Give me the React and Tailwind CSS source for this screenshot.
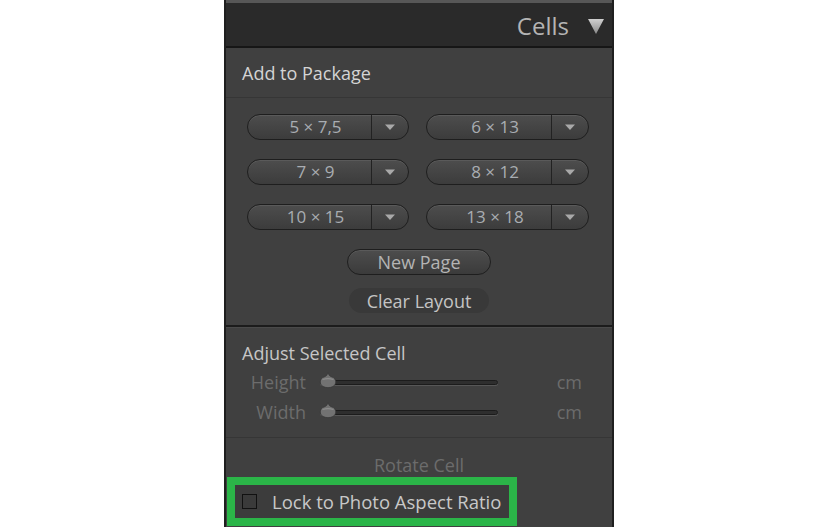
import React from "react";

const font = { fontFamily: '"Open Sans", "Liberation Sans", sans-serif' };

function Caret() {
  return (
    <svg width="12" height="8" viewBox="0 0 12 8">
      <path d="M1 1.5h10L6 7z" fill="#a9a9a9" />
    </svg>
  );
}

function SizeButton({ label }) {
  return (
    <div className="flex h-[26px] items-stretch rounded-full border border-[#1e1e1e] bg-gradient-to-b from-[#4d4d4d] to-[#3c3c3c] shadow-[inset_0_1px_0_rgba(255,255,255,0.08)]">
      <div className="flex flex-1 items-center justify-center pl-[12px] text-[17px] leading-[24px] text-[#a9adb2]">
        {label}
      </div>
      <div className="flex w-[37px] items-center justify-center border-l border-[#222]">
        <Caret />
      </div>
    </div>
  );
}

function Slider({ label }) {
  return (
    <div className="flex h-[30px] items-center">
      <div className="w-[80px] text-right text-[18px] leading-[24px] text-[#6c6c6c]">{label}</div>
      <div className="relative ml-[14px] h-[5px] w-[178px] rounded-full border border-[#1c1c1c] bg-[#2e2e2e] shadow-[0_1px_0_rgba(255,255,255,0.12)]">
        <svg className="absolute left-[-3px] top-[-10px]" width="20" height="18" viewBox="0 0 20 18">
          <path d="M10 1.5 C11 4.5 11.5 5 14 6 C18.5 7 19 13.5 15 15.5 C12 17 8 17 5 15.5 C1 13.5 1.5 7 6 6 C8.5 5 9 4.5 10 1.5z" fill="#727272" stroke="#383838" strokeWidth="0.8" />
          <path d="M4.5 8.5 C8 7.3 12 7.3 15.5 8.5" stroke="#8e8e8e" strokeWidth="1.2" fill="none" />
        </svg>
      </div>
      <div className="ml-auto mr-[30px] text-[18px] leading-[24px] text-[#6c6c6c]">cm</div>
    </div>
  );
}

export default function App() {
  return (
    <div className="h-[530px] w-[840px] bg-white" style={font}>
      <div className="ml-[224px] flex h-[527px] w-[390px] flex-col border-x-[2px] border-[#1f1f1f] bg-[#404040]">
        {/* panel header */}
        <div className="flex h-[48px] items-center justify-end border-t-[3px] border-b-[2px] border-t-[#575757] border-b-[#161616] bg-[#2a2a2a] pr-[8px] pt-[3px]">
          <span className="mr-[19px] text-[24px] leading-[30px] text-[#b4b4b4]">Cells</span>
          <svg width="16" height="15" viewBox="0 0 16 15">
            <defs>
              <linearGradient id="tri" x1="0" y1="0" x2="0" y2="1">
                <stop offset="0" stopColor="#cfcfcf" />
                <stop offset="1" stopColor="#8a8a8a" />
              </linearGradient>
            </defs>
            <path d="M0 0h16L8 15z" fill="url(#tri)" />
          </svg>
        </div>

        {/* add to package */}
        <div className="flex h-[50px] shrink-0 items-center border-b border-[#363636] pl-[16px] text-[18px] leading-[24px] text-[#d4d4d4]">
          Add to Package
        </div>
        <div className="grid grid-cols-[162px_163px] gap-x-[17px] gap-y-[19px] pl-[21px] pt-[16px]">
          <SizeButton label="5 × 7,5" />
          <SizeButton label="6 × 13" />
          <SizeButton label="7 × 9" />
          <SizeButton label="8 × 12" />
          <SizeButton label="10 × 15" />
          <SizeButton label="13 × 18" />
        </div>
        <div className="flex flex-col items-center pt-[19px] pb-[12px]">
          <div className="flex h-[26px] w-[144px] items-center justify-center rounded-full border border-[#1e1e1e] bg-gradient-to-b from-[#4d4d4d] to-[#3b3b3b] text-[18px] leading-[24px] text-[#b4b4b4] shadow-[inset_0_1px_0_rgba(255,255,255,0.08)]">
            New Page
          </div>
          <div className="mt-[13px] flex h-[25px] w-[140px] items-center justify-center rounded-full bg-[#393939] text-[18px] leading-[24px] text-[#c4c4c4]">
            Clear Layout
          </div>
        </div>

        {/* adjust selected cell */}
        <div className="border-t-[2px] border-[#1c1c1c]">
          <div className="border-t border-[#4a4a4a] pt-[13px]">
            <div className="pl-[16px] text-[18px] leading-[24px] text-[#c6c6c6]">Adjust Selected Cell</div>
            <div className="mt-[2px]">
              <Slider label="Height" />
              <Slider label="Width" />
            </div>
          </div>
          <div className="mt-[10px] border-t border-[#363636]">
            <div className="flex h-[39px] items-end justify-center text-[18px] leading-[24px] text-[#6c6c6c]">
              Rotate Cell
            </div>
            <div className="ml-[1px] flex h-[49px] w-[290px] items-center border-[8px] border-[#2bb548] bg-[#3c3c3c] pl-[7px]">
              <div className="h-[15px] w-[15px] border-[1.5px] border-[#111] bg-[#3a3a3a]" />
              <span className="ml-[15px] text-[18.5px] leading-[24px] text-[#c8c8c8]">Lock to Photo Aspect Ratio</span>
            </div>
          </div>
        </div>
      </div>
    </div>
  );
}
